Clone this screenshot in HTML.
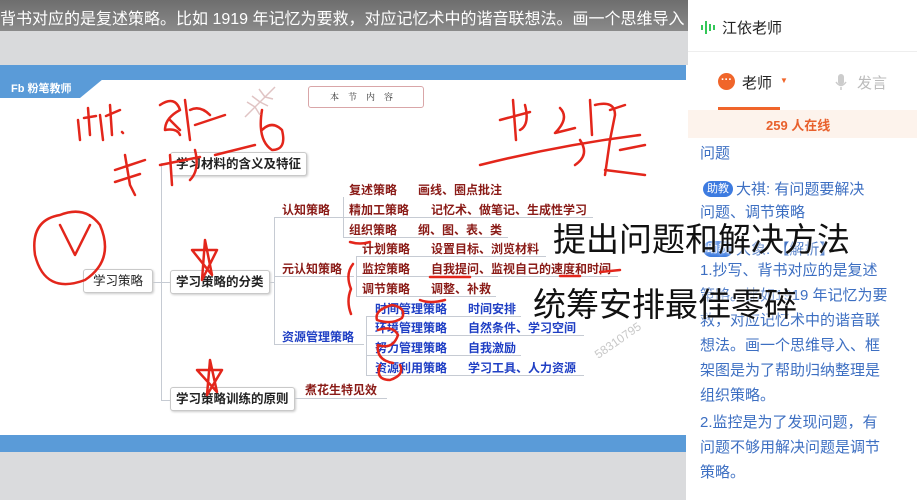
<!DOCTYPE html>
<html><head><meta charset="utf-8"><style>
*{margin:0;padding:0;box-sizing:border-box}
body{width:917px;height:500px;overflow:hidden;position:relative;background:#fff;font-family:"Liberation Sans","Noto Sans CJK SC",sans-serif}
.a{position:absolute;white-space:nowrap}
.mm{font-size:12px;font-weight:bold;line-height:14px}
.r{color:#8a1b17}.b{color:#1f3fc4}
.box{position:absolute;border:1px solid #c9c9c9;border-radius:3px;background:#fff;box-shadow:1px 1px 2px #ccc;font-size:12.5px;font-weight:bold;color:#222;padding:4px 5px;line-height:14px;white-space:nowrap}
.ln{position:absolute;background:#c6cbd3}
.ct{position:absolute;left:700px;font-size:15px;color:#3d6fc2;white-space:nowrap;line-height:20px}
.badge{display:inline-block;background:#3d7be0;color:#fff;font-size:11px;border-radius:8px;padding:0 4px;line-height:16px;margin-right:3px;vertical-align:2px}
.big{position:absolute;white-space:nowrap;font-size:33px;color:#111;text-shadow:0 0 6px #fff,0 0 3px #fff;z-index:5}
</style></head><body>
<!-- top banner -->
<div class="a" style="left:0;top:0;width:688px;height:31px;background:linear-gradient(#6e6e6e,#8a8a8a);overflow:hidden"><div class="a" style="left:0;top:5px;font-size:16px;color:#fff">背书对应的是复述策略。比如 1919 年记忆为要救，对应记忆术中的谐音联想法。画一个思维导入</div></div>
<div class="a" style="left:0;top:31px;width:688px;height:34px;background:#d9dadc"></div>
<!-- slide -->
<div class="a" style="left:0;top:65px;width:686px;height:15px;background:#5a9bd8"></div>
<svg class="a" style="left:0;top:79px" width="110" height="22"><polygon points="0,0 103,0 80,19 0,19" fill="#5a9bd8"/></svg>
<div class="a" style="left:11px;top:80px;font-size:11px;font-weight:bold;color:#fff">Fb 粉笔教师</div>
<div class="a" style="left:308px;top:86px;width:116px;height:22px;border:1.5px solid #d9a6a8;border-radius:3px;font-family:'Noto Serif CJK SC',serif;font-size:9px;text-align:center;line-height:19px;letter-spacing:9px;color:#333">本节内容</div>
<div class="a" style="left:0;top:435px;width:686px;height:17px;background:#5a9bd8"></div>
<div class="a" style="left:0;top:452px;width:686px;height:48px;background:#dadbdd"></div>
<!-- mind map lines -->
<div class="ln" style="left:153px;top:282px;width:8px;height:1px"></div>
<div class="ln" style="left:161px;top:163px;width:1px;height:237px"></div>
<div class="ln" style="left:161px;top:163px;width:9px;height:1px"></div>
<div class="ln" style="left:161px;top:282px;width:9px;height:1px"></div>
<div class="ln" style="left:161px;top:400px;width:9px;height:1px"></div>
<div class="ln" style="left:268px;top:282px;width:6px;height:1px"></div>
<div class="ln" style="left:274px;top:217px;width:1px;height:127px"></div>
<div class="ln" style="left:274px;top:217px;width:70px;height:1px"></div>
<div class="ln" style="left:274px;top:276px;width:80px;height:1px"></div>
<div class="ln" style="left:274px;top:344px;width:90px;height:1px"></div>
<div class="ln" style="left:343px;top:197px;width:1px;height:40px"></div>
<div class="ln" style="left:343px;top:217px;width:250px;height:1px"></div>
<div class="ln" style="left:343px;top:237px;width:165px;height:1px"></div>
<div class="ln" style="left:356px;top:256px;width:1px;height:40px"></div>
<div class="ln" style="left:356px;top:256px;width:190px;height:1px"></div>
<div class="ln" style="left:356px;top:276px;width:262px;height:1px"></div>
<div class="ln" style="left:356px;top:296px;width:140px;height:1px"></div>
<div class="ln" style="left:366px;top:316px;width:1px;height:60px"></div>
<div class="ln" style="left:366px;top:316px;width:155px;height:1px"></div>
<div class="ln" style="left:366px;top:335px;width:218px;height:1px"></div>
<div class="ln" style="left:366px;top:355px;width:155px;height:1px"></div>
<div class="ln" style="left:366px;top:375px;width:218px;height:1px"></div>
<div class="ln" style="left:292px;top:398px;width:95px;height:1px"></div>
<div class="box" style="left:83px;top:269px;width:70px;font-weight:normal;text-align:center">学习策略</div>
<div class="box" style="left:170px;top:152px;">学习材料的含义及特征</div>
<div class="box" style="left:170px;top:270px;">学习策略的分类</div>
<div class="box" style="left:170px;top:387px;">学习策略训练的原则</div>
<div class="a mm r" style="left:282px;top:203px">认知策略</div>
<div class="a mm r" style="left:282px;top:262px">元认知策略</div>
<div class="a mm b" style="left:282px;top:330px">资源管理策略</div>
<div class="a mm r" style="left:305px;top:383px">煮花生特见效</div>
<div class="a mm r" style="left:349px;top:183px">复述策略</div><div class="a mm r" style="left:418px;top:183px">画线、圈点批注</div>
<div class="a mm r" style="left:349px;top:203px">精加工策略</div><div class="a mm r" style="left:431px;top:203px">记忆术、做笔记、生成性学习</div>
<div class="a mm r" style="left:349px;top:223px">组织策略</div><div class="a mm r" style="left:418px;top:223px">纲、图、表、类</div>
<div class="a mm r" style="left:362px;top:242px">计划策略</div><div class="a mm r" style="left:431px;top:242px">设置目标、浏览材料</div>
<div class="a mm r" style="left:362px;top:262px">监控策略</div><div class="a mm r" style="left:431px;top:262px">自我提问、监视自己的速度和时间</div>
<div class="a mm r" style="left:362px;top:282px">调节策略</div><div class="a mm r" style="left:431px;top:282px">调整、补救</div>
<div class="a mm b" style="left:375px;top:302px">时间管理策略</div><div class="a mm b" style="left:468px;top:302px">时间安排</div>
<div class="a mm b" style="left:375px;top:321px">环境管理策略</div><div class="a mm b" style="left:468px;top:321px">自然条件、学习空间</div>
<div class="a mm b" style="left:375px;top:341px">努力管理策略</div><div class="a mm b" style="left:468px;top:341px">自我激励</div>
<div class="a mm b" style="left:375px;top:361px">资源利用策略</div><div class="a mm b" style="left:468px;top:361px">学习工具、人力资源</div>
<div class="a" style="left:592px;top:350px;font-size:12px;color:#c8c8c8;transform:rotate(-35deg);transform-origin:left top">58310795</div>
<!-- red handwriting -->
<svg class="a" style="left:0;top:0" width="688" height="440" fill="none" stroke="#e3261b" stroke-width="2.5" stroke-linecap="round" stroke-linejoin="round">
<path d="M78 120 L80 140 M88 108 L90 135 M84 118 L96 116 M100 115 L103 140 M110 105 L112 135 M106 116 L120 110 M122 132 l1 1"/>
<path d="M160 105 q15 -10 20 5 q-15 8 -15 20 q12 -2 15 5 M170 120 l10 10 M185 100 l5 40 M190 110 q10 -5 20 5 M195 125 l30 -10"/>
<path d="M115 170 l30 -10 M125 155 l5 30 M115 182 l25 -8 M130 185 l5 10 M170 155 l2 30 M160 165 l40 -8 M195 150 q5 20 -5 30 M215 155 l40 -10 M262 110 q-5 30 10 40 q15 0 10 -20 q-10 -10 -20 0"/>
<path d="M500 120 l30 -8 M513 100 l3 40 M525 105 q5 20 -5 25 M560 108 q10 10 -5 25 l20 -5 M590 100 l2 35 M595 105 q20 -5 20 10 l-5 25 M610 110 l15 -5"/>
<path d="M480 165 q80 -20 160 -30 M580 140 q10 15 -5 25 M610 140 l-5 35 M620 150 l25 -5 M605 170 l40 5"/>
<path d="M60 215 q-30 5 -25 40 q10 40 50 25 q30 -20 15 -55 q-15 -20 -40 -10 M60 225 l15 30 l15 -30"/>
<path d="M205 240 l-3 40 l15 -30 l-25 0 l20 25 z"/>
<path d="M210 360 l-3 35 l15 -25 l-25 0 l20 22 z"/>
<path d="M353 264 q-8 10 -2 25 q-5 12 0 25 M392 305 q-18 5 -15 15 q15 5 25 -2 q5 -10 -10 -13 M378 330 q15 -5 20 5 q-5 15 -20 10 q-2 15 15 18 M380 365 q-5 15 10 15 q15 -5 10 -15"/>
<path d="M350 242 q10 3 20 0 M430 277 l40 0 M560 276 l20 0 M600 272 l20 -2 M420 300 q10 4 25 0"/>
</svg>
<svg class="a" style="left:240px;top:82px" width="40" height="40" stroke="#e0c4c4" stroke-width="1.5" fill="none"><path d="M5 35 L35 5 M15 25 l-8 -5 M20 20 l-8 -6 M25 15 l-6 -8 M15 25 l5 8 M20 20 l8 4 M25 15 l8 2"/></svg>
<!-- right panel -->
<div class="a" style="left:688px;top:0;width:229px;height:500px;background:#fff"></div>
<svg class="a" style="left:700px;top:19px" width="16" height="16"><g fill="#34c759"><rect x="1" y="6" width="2" height="5"/><rect x="5" y="2" width="2" height="13"/><rect x="9" y="5" width="2" height="7"/><rect x="13" y="6" width="2" height="5"/></g></svg>
<div class="a" style="left:722px;top:17px;font-size:15px;color:#222">江依老师</div>
<div class="a" style="left:688px;top:51px;width:229px;height:1px;background:#eee"></div>
<div class="a" style="left:718px;top:73px;width:17px;height:17px;border-radius:50%;background:#f0652a"></div>
<div class="a" style="left:721px;top:74px;font-size:11px;color:#fff;font-weight:bold">···</div>
<div class="a" style="left:742px;top:72px;font-size:15px;color:#222">老师</div>
<div class="a" style="left:780px;top:76px;font-size:8px;color:#f0652a">▼</div>
<svg class="a" style="left:834px;top:73px" width="14" height="18"><rect x="4" y="1" width="6" height="11" rx="3" fill="#ccc"/><path d="M2 9 q5 7 10 0 M7 14 v3" stroke="#ccc" stroke-width="1.5" fill="none"/></svg>
<div class="a" style="left:857px;top:72px;font-size:15px;color:#bbb">发言</div>
<div class="a" style="left:718px;top:107px;width:62px;height:3px;background:#f0652a"></div>
<div class="a" style="left:688px;top:110px;width:229px;height:28px;background:#fdf3ec"></div>
<div class="a" style="left:766px;top:115px;font-size:13px;font-weight:bold;color:#e8602c">259 人在线</div>
<div class="ct" style="top:144px">问题</div>
<div class="ct" style="top:180px;left:703px"><span class="badge">助教</span>大祺: 有问题要解决</div>
<div class="ct" style="top:203px">问题、调节策略</div>
<div class="ct" style="top:240px;left:703px"><span class="badge">助教</span>大象: 【解析】</div>
<div class="ct" style="top:261px">1.抄写、背书对应的是复述</div>
<div class="ct" style="top:286px">策略。比如1919 年记忆为要</div>
<div class="ct" style="top:311px">救，对应记忆术中的谐音联</div>
<div class="ct" style="top:336px">想法。画一个思维导入、框</div>
<div class="ct" style="top:361px">架图是为了帮助归纳整理是</div>
<div class="ct" style="top:386px">组织策略。</div>
<div class="ct" style="top:413px">2.监控是为了发现问题，有</div>
<div class="ct" style="top:438px">问题不够用解决问题是调节</div>
<div class="ct" style="top:463px">策略。</div>
<!-- overlay big text -->
<div class="big" style="left:553px;top:213px">提出问题和解决方法</div>
<div class="big" style="left:533px;top:278px">统筹安排最佳零碎</div>
</body></html>
